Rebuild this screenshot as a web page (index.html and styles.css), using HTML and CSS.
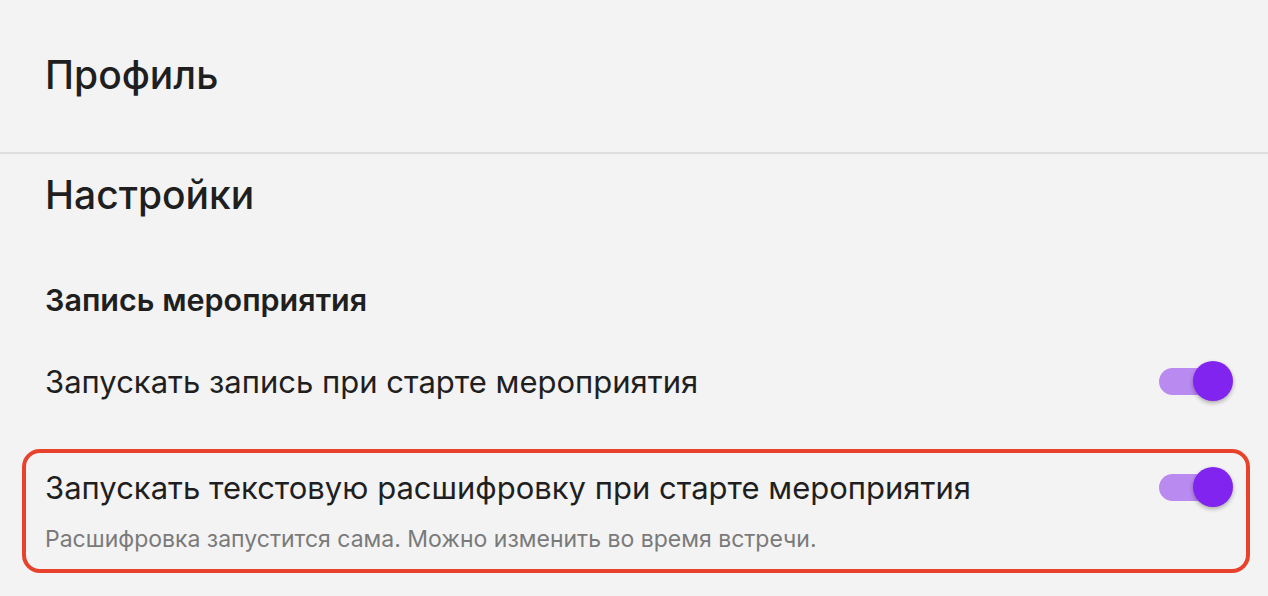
FILE: index.html
```html
<!DOCTYPE html>
<html lang="ru">
<head>
    <meta charset="UTF-8">
    <meta name="viewport" content="width=device-width, initial-scale=1.0">
    <title>Профиль</title>
    <link rel="stylesheet" href="styles.css">
</head>
<body>
    <header class="page-header">
        <h1>Профиль</h1>
    </header>

    <main class="settings">
        <h2>Настройки</h2>

        <section class="group">
            <h3>Запись мероприятия</h3>

            <div class="option">
                <div class="option-text">
                    <p class="option-title">Запускать запись при старте мероприятия</p>
                </div>
                <span class="toggle on"><span class="knob"></span></span>
            </div>

            <div class="option highlighted">
                <div class="option-text">
                    <p class="option-title">Запускать текстовую расшифровку при старте мероприятия</p>
                    <p class="option-hint">Расшифровка запустится сама. Можно изменить во время встречи.</p>
                </div>
                <span class="toggle on"><span class="knob"></span></span>
            </div>
        </section>
    </main>
</body>
</html>
```

FILE: styles.css
```css
body {
    margin: 0;
    background-color: #f3f3f3;
    color: #1f1f1f;
    font-family: Inter, "Noto Sans", sans-serif;
}
.page-header {
    height: 154px;
    border-bottom: 2px solid #dedede;
    padding: 0 45px;
    box-sizing: border-box;
}
.page-header h1 {
    margin: 0;
    padding-top: 52px;
    font-size: 39px;
    font-weight: 500;
    line-height: 46px;
}
.settings {
    padding: 0 18px 0 22px;
}
.settings h2 {
    margin: 0;
    padding: 18px 0 0 23px;
    font-size: 39px;
    font-weight: 500;
    line-height: 46px;
}
.group h3 {
    margin: 0;
    padding: 65px 0 0 23px;
    font-size: 30.5px;
    font-weight: 600;
    line-height: 34px;
}
.option {
    display: flex;
    align-items: flex-start;
    justify-content: space-between;
    padding: 0 19px;
    border: 4px solid transparent;
    border-radius: 18px;
}
.group .option:first-of-type {
    margin-top: 43px;
}
.option p {
    margin: 0;
}
.option-title {
    font-size: 31px;
    line-height: 36px;
}
.option-hint {
    margin-top: 20px !important;
    font-size: 23px;
    line-height: 26px;
    color: #7a7a7a;
}
.highlighted {
    margin-top: 45px;
    padding-top: 17px;
    padding-bottom: 17px;
    border-color: #e8412c;
}
.toggle {
    position: relative;
    width: 68px;
    height: 27px;
    margin-top: 4px;
    border-radius: 14px;
    background-color: #b98af0;
    flex-shrink: 0;
}
.knob {
    position: absolute;
    top: -7px;
    right: -6px;
    width: 40px;
    height: 40px;
    border-radius: 50%;
    background-color: #8124f0;
    box-shadow: 0 2px 4px rgba(0, 0, 0, 0.3);
}
```
